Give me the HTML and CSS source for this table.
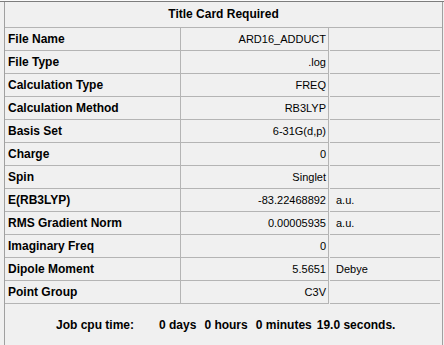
FILE: index.html
```html
<!DOCTYPE html>
<html>
<head>
<meta charset="utf-8">
<link rel="stylesheet" href="styles.css">
</head>
<body>
<div class="edge"></div>
<div class="rule"></div>
<div class="panel">
  <div class="title">Title Card Required</div>
  <div class="grid">
    <div class="lbl">File Name</div><div class="val">ARD16_ADDUCT</div><div class="unit"></div>
    <div class="lbl">File Type</div><div class="val">.log</div><div class="unit"></div>
    <div class="lbl">Calculation Type</div><div class="val">FREQ</div><div class="unit"></div>
    <div class="lbl">Calculation Method</div><div class="val">RB3LYP</div><div class="unit"></div>
    <div class="lbl">Basis Set</div><div class="val">6-31G(d,p)</div><div class="unit"></div>
    <div class="lbl">Charge</div><div class="val">0</div><div class="unit"></div>
    <div class="lbl">Spin</div><div class="val">Singlet</div><div class="unit"></div>
    <div class="lbl">E(RB3LYP)</div><div class="val">-83.22468892</div><div class="unit">a.u.</div>
    <div class="lbl">RMS Gradient Norm</div><div class="val">0.00005935</div><div class="unit">a.u.</div>
    <div class="lbl">Imaginary Freq</div><div class="val">0</div><div class="unit"></div>
    <div class="lbl">Dipole Moment</div><div class="val">5.5651</div><div class="unit">Debye</div>
    <div class="lbl">Point Group</div><div class="val">C3V</div><div class="unit"></div>
  </div>
  <div class="footer">
    <span class="f-label">Job cpu time:</span>
    <span class="f-days">0 days</span>
    <span class="f-hours">0 hours</span>
    <span class="f-min">0 minutes</span>
    <span class="f-sec">19.0 seconds.</span>
  </div>
</div>
</body>
</html>
```
FILE: styles.css
```css
html, body {
  margin: 0;
  padding: 0;
}

body {
  width: 444px;
  height: 345px;
  overflow: hidden;
  background: #f0f0f0;
  font-family: "Liberation Sans", Arial, sans-serif;
  font-size: 11px;
  color: #000;
}

.edge {
  height: 1px;
  background: #fafafa;
}

.rule {
  height: 1px;
  background: #7d7d7d;
}

.panel {
  margin-left: 4px;
  width: 437px;
  height: 343px;
  border-left: 1px solid #a0a0a0;
  border-right: 1px solid #a0a0a0;
  background: #f0f0f0;
}

.title {
  height: 25px;
  line-height: 25px;
  text-align: center;
  font-weight: bold;
  font-size: 12px;
  border-bottom: 1px solid #b4b4b4;
}

.grid {
  display: grid;
  grid-template-columns: 175px 149px 111px;
  grid-auto-rows: 23px;
}

.grid > div {
  box-sizing: border-box;
  border-bottom: 1px solid #b4b4b4;
  line-height: 22px;
  white-space: nowrap;
}

.lbl {
  font-weight: bold;
  font-size: 12px;
  padding-left: 3px;
  border-right: 1px solid #b4b4b4;
  width: 176px;
}

.val {
  text-align: right;
  padding-right: 2px;
  border-right: 1px solid #b4b4b4;
  margin-left: 1px;
}

.unit {
  padding-left: 6px;
  margin-left: 1px;
}

.footer {
  display: flex;
  align-items: center;
  height: 42px;
  font-weight: bold;
  font-size: 12px;
  white-space: nowrap;
}

.f-label {
  margin-left: 51px;
}

.f-days {
  margin-left: 25px;
}

.f-hours {
  margin-left: 8px;
}

.f-min {
  margin-left: 8px;
}

.f-sec {
  margin-left: 5px;
}
```
